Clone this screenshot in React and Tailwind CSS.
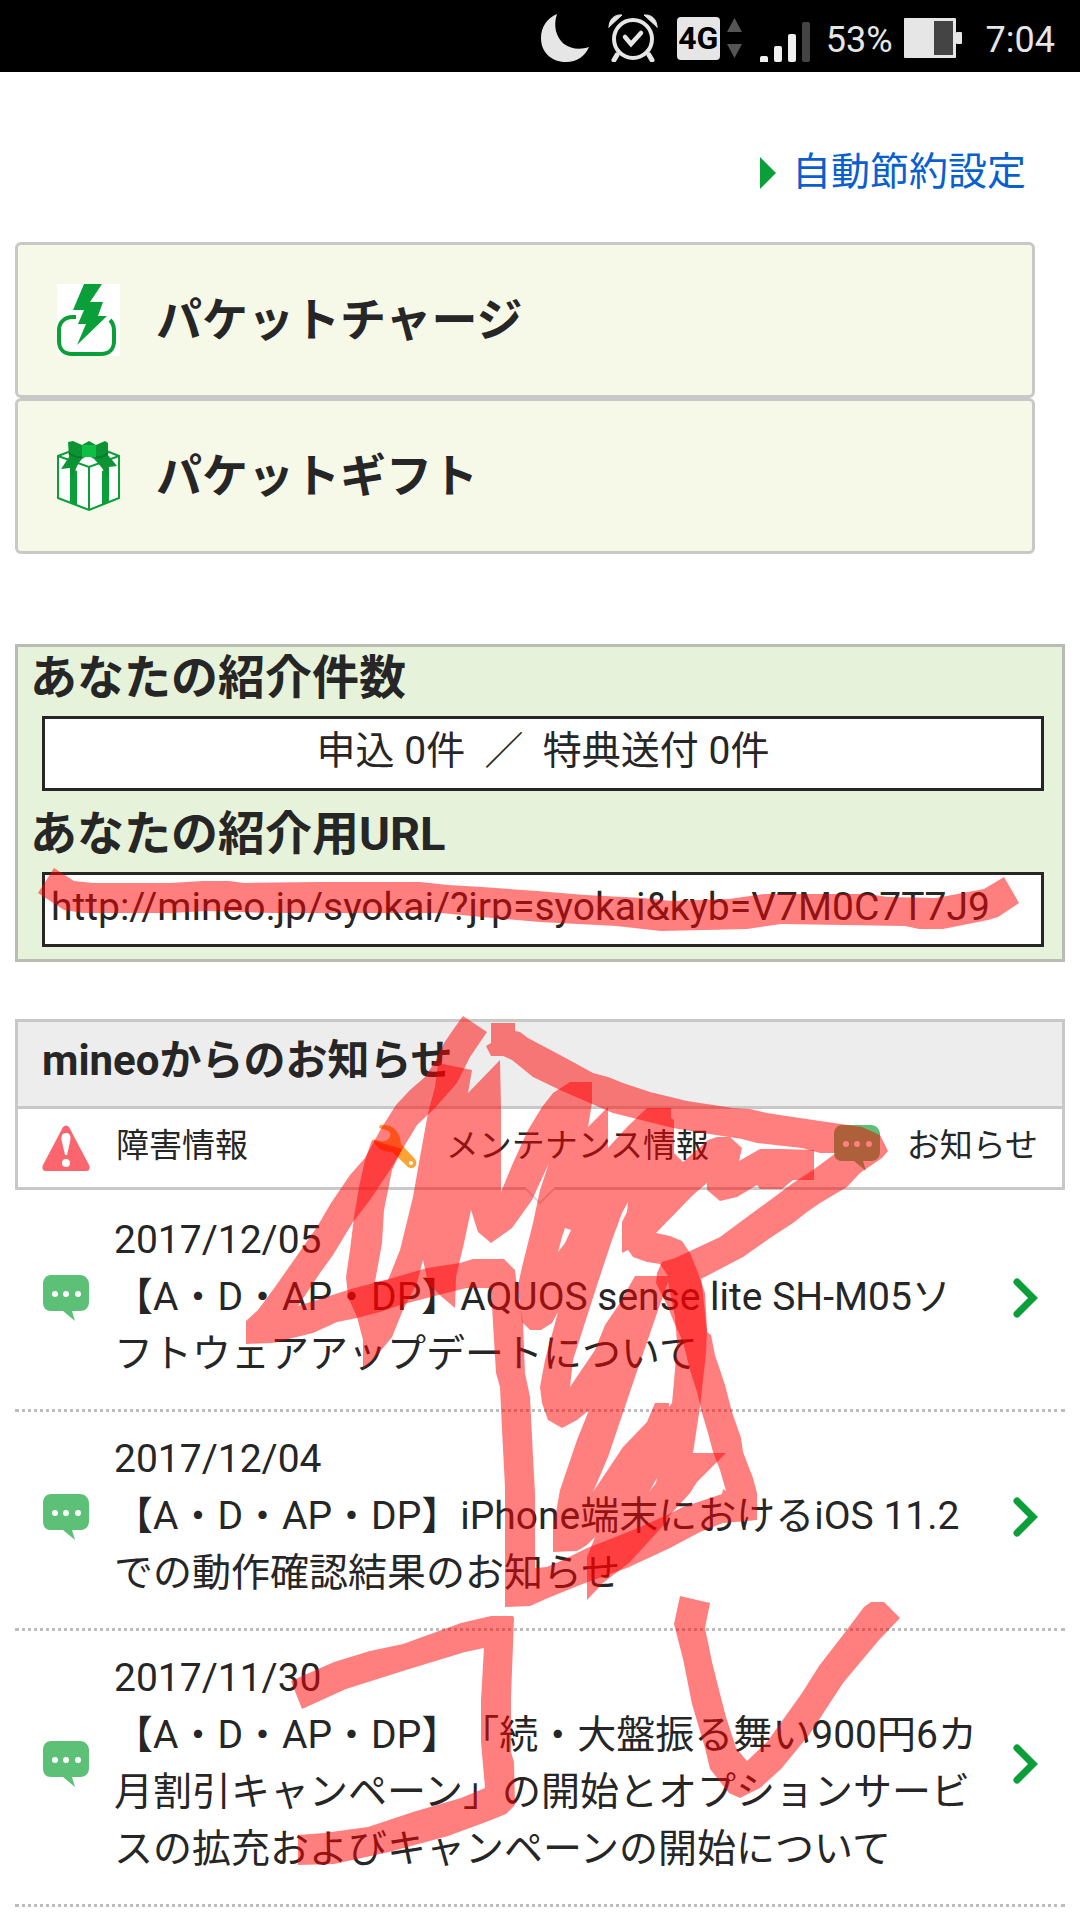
const notices = [
    { date: '2017/12/05', title: '【A・D・AP・DP】AQUOS sense lite SH-M05ソフトウェアアップデートについて' },
    { date: '2017/12/04', title: '【A・D・AP・DP】iPhone端末におけるiOS 11.2での動作確認結果のお知らせ' },
    { date: '2017/11/30', title: '【A・D・AP・DP】「続・大盤振る舞い900円6カ月割引キャンペーン」の開始とオプションサービスの拡充およびキャンペーンの開始について' },
]

const MoonIcon = () => (
    <svg className="w-12 h-12" viewBox="0 0 48 48" fill="#e6e6e6" aria-hidden="true">
        <path d="M16 0C12 12 15 23 23 30c7 5 16 6 25 3-4 9-12 15-23 15C10 48 0 38 0 24 0 13 6 4 16 0Z" />
    </svg>
)

const AlarmIcon = () => (
    <svg className="w-[50px] h-12" viewBox="0 0 50 48" fill="none" stroke="#e6e6e6" strokeWidth="4" strokeLinecap="round" aria-hidden="true">
        <circle cx="25" cy="25" r="19" />
        <path d="m17 23 6 7 10-11" strokeWidth="4.5" />
        <path d="m9 41-3 5M41 41l3 5" strokeWidth="5" />
        <path d="M1 13C1 6 6 0 14 1L1 13ZM49 13C49 6 44 0 36 1l13 12Z" fill="#e6e6e6" strokeWidth="1" />
    </svg>
)

const SignalIcon = () => (
    <svg className="w-[50px] h-12" viewBox="0 0 50 48" fill="#f0f0f0" aria-hidden="true">
        <rect x="0" y="42" width="8" height="8" rx="2" />
        <rect x="14" y="32" width="8" height="16" rx="2" />
        <rect x="28" y="20" width="8" height="28" rx="2" />
        <rect x="42" y="8" width="8" height="40" rx="2" fill="#444444" />
    </svg>
)

const BatteryIcon = () => (
    <svg className="w-[58px] h-10" viewBox="0 0 58 40" fill="#e6e6e6" aria-hidden="true">
        <rect width="52" height="40" rx="1" />
        <rect x="52" y="14" width="6" height="12" rx="1" />
        <rect x="30" y="3" width="19" height="34" fill="#444444" />
    </svg>
)

const StatusBar = () => (
    <header className="flex h-[72px] items-center justify-end bg-black pt-1 pr-[25px] text-[36px] leading-none text-[#e6e6e6]">
        <MoonIcon />
        <div className="ml-[19px]"><AlarmIcon /></div>
        <div className="ml-[19px] flex h-[43px] w-[43px] items-center justify-center rounded-sm bg-[#e6e6e6] text-[32px] font-bold text-black">4G</div>
        <svg className="ml-[7px] h-10 w-[15px]" viewBox="0 0 15 40" fill="#555555" aria-hidden="true">
            <path d="M7.5 0 15 14H0ZM7.5 40 15 26H0Z" />
        </svg>
        <div className="ml-[18px]"><SignalIcon /></div>
        <span className="ml-4 pt-1">53%</span>
        <div className="ml-[11px]"><BatteryIcon /></div>
        <span className="ml-6 pt-1">7:04</span>
    </header>
)

const ChargeIcon = () => (
    <svg className="h-[72px] w-[63px] shrink-0 bg-white" viewBox="0 0 63 72" aria-hidden="true">
        <path d="M19 33h-3C7 33 2 39 2 46v11c0 8 5 13 13 13h29c8 0 13-5 13-13V47c0-5-1-8-4-11" fill="none" stroke="#0a9f39" strokeWidth="4" />
        <path d="M27 0h18L33 18h13l-5 14h9L20 61l9-21h-8l6-14H16Z" fill="#0a9f39" />
    </svg>
)

const GiftIcon = () => (
    <svg className="h-[72px] w-[63px] shrink-0" viewBox="0 0 63 72" aria-hidden="true">
        <path d="M1 16 32 4l30 12v42L32 70 1 58Z" fill="#ffffff" stroke="#0a9f39" strokeWidth="2" />
        <path d="m1 16 31 11 30-11M32 27v43" fill="none" stroke="#0a9f39" strokeWidth="2" />
        <path d="m13 28 7 3v34l-7-3ZM45 31l7-3v34l-7 3Z" fill="#0a9f39" />
        <path d="m11 2 5-1 9 4 7-4 7 4 9-4 3 2v12l9 11-8 1-1 10c-4-7-9-13-14-18-4-3-8-3-12 0-5 5-7 12-10 20l-2-11-9 1 8-12Z" fill="#0c9434" />
        <path d="M12 13c5 4 9 5 13 4M51 13c-4 4-8 5-12 4" fill="none" stroke="#087a29" strokeWidth="2" />
        <path d="M25 5h14v12H25Z" fill="#0fbe45" />
    </svg>
)

const BubbleIcon = () => (
    <svg className="h-[46px] w-12 shrink-0" viewBox="0 0 48 46" aria-hidden="true">
        <path d="M9 0h29c5 0 9 4 9 9v18c0 6-4 9-9 9h-8l3 10-12-10H9c-5 0-8-3-8-9V9c0-5 3-9 8-9Z" fill="#5dc077" />
        <g fill="#ffffff">
            <circle cx="13" cy="19" r="3" />
            <circle cx="24" cy="19" r="3" />
            <circle cx="36" cy="19" r="3" />
        </g>
    </svg>
)

const WarningIcon = () => (
    <svg className="h-[46px] w-12 shrink-0" viewBox="0 0 48 46" aria-hidden="true">
        <path d="M21 2q3-3 6 0l20 38q2 6-3 6H4q-5 0-3-6Z" fill="#fb656d" />
        <path d="M24 8c5 0 5 5 4 9l-3 13h-2l-3-13c-1-4-1-9 4-9Z" fill="#ffffff" />
        <circle cx="24" cy="38" r="4" fill="#ffffff" />
    </svg>
)

const WrenchIcon = () => (
    <svg className="h-[46px] w-12 shrink-0" viewBox="0 0 48 46" aria-hidden="true">
        <path d="M8 0c11-1 17 4 20 13l1 6 14 15c3 4 1 9-4 9-2 0-4-1-5-3L20 27C10 27 4 23 1 14l7 2c5 1 9-1 10-5 1-3-1-5-4-6L7 3Z" fill="#fba436" />
        <circle cx="39" cy="38" r="2" fill="#ffffff" />
    </svg>
)

const ChevronIcon = () => (
    <svg className="h-10 w-[25px] shrink-0" viewBox="0 0 25 40" fill="none" stroke="#0a9f39" strokeWidth="7" strokeLinecap="round" aria-hidden="true">
        <path d="m4 4 16 16L4 36" />
    </svg>
)

const MenuButton = ({ icon, label }) => (
    <a href="#" className="flex h-[156px] items-center gap-9 rounded-md border-3 border-[#c8c8c8] bg-[#f6f8e8] px-[39px] text-[46px] leading-[60px] font-bold">
        {icon}
        <span>{label}</span>
    </a>
)

// Tracés au marqueur rouge posés par-dessus la page
const MarkerOverlay = () => (
    <svg className="pointer-events-none absolute inset-x-0 top-0 w-full" viewBox="0 0 1080 1920" fill="#ff0000" fillOpacity="0.5" fillRule="evenodd" aria-hidden="true">
        {/* URL */}
        <path d="M54 868 74 881 93 883 170 883 203 881 229 881 244 883 320 882 420 882 448 885 482 887 537 891 585 895 643 898 671 901 729 899 764 894 867 894 888 897 936 898 984 889 1004 877 1019 903 998 917 988 920 943 929 919 929 905 926 781 924 747 929 661 931 616 926 540 922 482 917 441 913 275 913 207 911 172 913 83 913 64 910 38 893Z" />
        {/* Contour de la flèche */}
        <path d="M463 1016 455 1027 444 1043 436 1060 425 1077 410 1090 396 1105 382 1127 365 1158 350 1175 331 1203 317 1227 289 1267 275 1287 258 1310 246 1321 246 1344 272 1343 313 1333 337 1322 357 1318 380 1312 400 1305 450 1292 467 1288 491 1288 493 1323 496 1373 500 1387 502 1430 505 1487 505 1607 530 1606 548 1598 580 1585 607 1575 627 1568 670 1548 700 1532 723 1523 747 1521 757 1520 757 1493 753 1478 743 1452 741 1438 732 1412 725 1385 715 1355 711 1335 707 1332 705 1313 702 1285 701 1279 743 1257 770 1238 793 1223 807 1212 820 1203 847 1187 860 1173 882 1158 888 1151 880 1135 862 1127 827 1122 793 1117 767 1113 750 1109 733 1108 687 1101 650 1092 623 1083 608 1077 593 1073 573 1062 560 1055 528 1038 520 1032 515 1031 515 1023 491 1023 491 1043 486 1046 491 1056 503 1056 512 1060 533 1077 560 1090 592 1104 613 1113 633 1118 673 1128 703 1133 742 1139 757 1143 802 1148 820 1153 836 1153 813 1170 793 1183 773 1198 747 1217 720 1237 688 1252 675 1258 662 1262 657 1273 656 1283 668 1307 673 1320 683 1342 690 1370 697 1392 702 1413 708 1433 713 1452 720 1470 726 1491 723 1489 722 1494 713 1497 683 1507 667 1515 640 1527 613 1538 587 1548 563 1560 547 1567 535 1568 535 1493 533 1457 530 1397 525 1373 523 1323 518 1295 515 1270 504 1259 473 1259 460 1263 427 1268 413 1272 389 1279 351 1289 298 1306 320 1273 333 1255 353 1222 370 1200 390 1170 402 1150 417 1125 435 1108 457 1083 470 1057 487 1032Z" />
        {/* Remplissage en zigzag */}
        <path d="M438 1063 472 1070 468 1093 500 1060 501 1108 501 1192 513 1163 528 1130 542 1107 553 1093 570 1082 592 1082 592 1103 588 1127 608 1107 608 1148 627 1127 647 1108 671 1108 671 1118 674 1120 674 1153 683 1162 708 1140 717 1137 730 1137 742 1148 739 1161 760 1149 782 1149 814 1150 814 1180 793 1180 782 1189 760 1189 757 1185 737 1197 720 1201 707 1190 707 1183 693 1195 656 1233 670 1236 682 1241 690 1253 697 1270 705 1293 707 1330 706 1353 700 1407 693 1453 726 1453 697 1482 690 1493 670 1515 662 1527 630 1562 603 1583 587 1600 587 1557 595 1537 587 1545 577 1551 553 1552 553 1530 560 1490 577 1440 589 1410 577 1420 562 1428 548 1420 542 1403 540 1387 545 1360 558 1312 552 1323 541 1330 530 1330 522 1322 518 1290 517 1290 522 1267 533 1223 540 1190 549 1163 532 1200 512 1228 491 1243 478 1232 471 1210 464 1243 456 1277 455 1308 442 1297 428 1283 423 1260 417 1283 403 1310 392 1337 379 1353 363 1369 363 1340 357 1317 348 1297 346 1277 350 1250 354 1217 359 1187 365 1160 372 1140 402 1149 392 1170 384 1210 382 1243 375 1282 388 1280 400 1250 413 1197 420 1157 428 1113 435 1087Z
            M565 1228 571 1230 565 1243 558 1252 562 1237Z
            M628 1202 627 1212 622 1222 622 1253 628 1250 633 1257 647 1262 660 1264 668 1276 635 1276 627 1290 620 1303 605 1325 595 1350 570 1387 573 1360 590 1307 602 1270 612 1240 622 1213Z
            M668 1282 675 1317 677 1343 675 1370 672 1403 669 1407 669 1403 655 1403 647 1422 623 1447 593 1492 608 1457 633 1383 657 1313Z
            M657 1478 656 1483 649 1492Z" />
        {/* コ */}
        <path d="M291 1681 334 1662 370 1651 403 1644 461 1623 491 1616 513 1616 514 1618 511 1697 511 1752 514 1762 515 1805 506 1814 486 1822 448 1836 389 1852 334 1864 298 1865 298 1835 324 1833 368 1827 413 1812 461 1798 485 1788 481 1742 481 1700 484 1648 465 1652 406 1670 346 1689 302 1709Z" />
        {/* レ */}
        <path d="M680 1596 710 1603 705 1628 712 1662 719 1690 726 1717 736 1748 747 1761 767 1742 802 1693 819 1666 846 1631 864 1607 871 1602 884 1602 900 1618 879 1640 843 1683 809 1735 781 1769 760 1788 740 1798 729 1793 710 1769 705 1748 692 1704 683 1659 674 1624Z" />
    </svg>
)

const App = () => {
    return (
        <div lang="ja" className="relative min-h-screen overflow-hidden bg-white font-[Roboto,'Noto_Sans_CJK_JP',sans-serif] text-[39px] leading-[57px] text-[#262626] [text-spacing-trim:space-all]">
            <StatusBar />

            <main className="px-[15px]">
                <div className="flex justify-end pt-[72px] pr-[39px] pb-[41px]">
                    <a href="#" className="flex items-center gap-4 text-[#0a5fd0]">
                        <svg className="h-8 w-4" viewBox="0 0 16 32" fill="#0a9f39" aria-hidden="true">
                            <path d="M0 0 16 16 0 32Z" />
                        </svg>
                        自動節約設定
                    </a>
                </div>

                <nav className="mr-[30px]">
                    <MenuButton icon={<ChargeIcon />} label="パケットチャージ" />
                    <MenuButton icon={<GiftIcon />} label="パケットギフト" />
                </nav>

                {/* Parrainage */}
                <section className="mt-[90px] border-3 border-[#b9bcb5] bg-[#e7f2da] pr-[18px] pb-3 pl-6">
                    <h2 className="-ml-3 h-[69px] text-[47px] leading-[62px] font-bold">あなたの紹介件数</h2>
                    <p className="h-[75px] border-3 border-[#262626] bg-white pt-1 text-center whitespace-pre">申込 0件  ／  特典送付 0件</p>
                    <h2 className="mt-3 -ml-3 h-[69px] text-[47px] leading-[62px] font-bold">あなたの紹介用URL</h2>
                    <p className="h-[75px] overflow-hidden border-3 border-[#262626] bg-white px-[6px] pt-1">http://mineo.jp/syokai/?jrp=syokai&amp;kyb=V7M0C7T7J9</p>
                </section>

                {/* Informations */}
                <section className="mt-[57px]">
                    <div className="relative border-3 border-[#c8c8c8]">
                        <h2 className="h-[87px] border-b-3 border-[#c8c8c8] bg-[#ededed] px-6 pt-[9px] text-[42px] leading-[60px] font-bold">mineoからのお知らせ</h2>
                        <ul className="flex h-[78px] items-center justify-between px-6 text-[33px] leading-[48px]">
                            <li className="flex items-center gap-[26px]"><WarningIcon /><span className="pb-1">障害情報</span></li>
                            <li className="flex items-center gap-[26px]"><WrenchIcon /><span className="pb-1">メンテナンス情報</span></li>
                            <li className="flex items-center gap-[26px]"><BubbleIcon /><span className="pb-1">お知らせ</span></li>
                        </ul>
                        <svg className="absolute top-full left-1/2 h-[18px] w-8 -translate-x-1/2" viewBox="0 0 32 18" aria-hidden="true">
                            <path d="M1 0 16 15 31 0Z" fill="#ffffff" />
                            <path d="M1 1 16 16 31 1" fill="none" stroke="#d8d8d8" strokeWidth="2" />
                        </svg>
                    </div>

                    <ul className="pt-[3px]">
                        {notices.map((notice) => (
                            <li key={notice.date} className="border-b-3 border-dotted border-[#bdbdbd]">
                                <a href="#" className="flex items-center pt-[19px] pr-[27px] pb-[26px] pl-[27px]">
                                    <BubbleIcon />
                                    <div className="mr-[35px] ml-6 flex-1">
                                        <time className="block">{notice.date}</time>
                                        <p>{notice.title}</p>
                                    </div>
                                    <ChevronIcon />
                                </a>
                            </li>
                        ))}
                    </ul>
                </section>
            </main>

            <MarkerOverlay />
        </div>
    )
}

export default App
